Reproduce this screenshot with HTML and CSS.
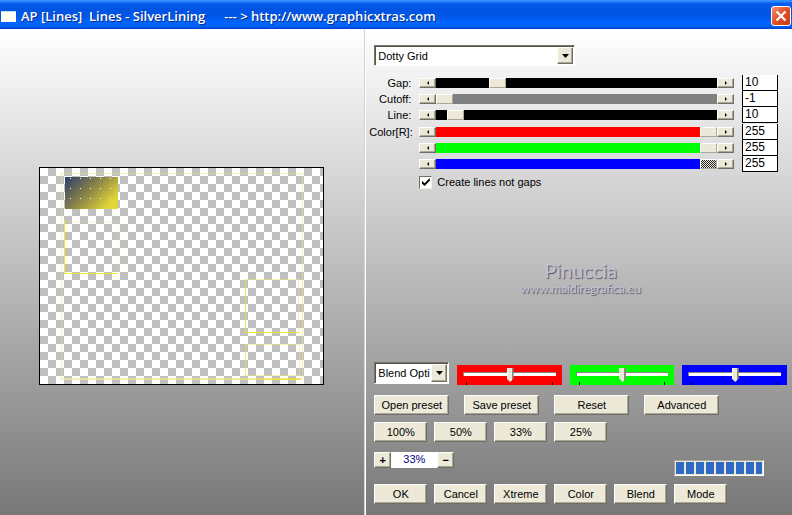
FILE: index.html
```html
<!DOCTYPE html>
<html lang="en">
<head>
<meta charset="utf-8">
<title>AP [Lines] Lines - SilverLining</title>
<link rel="stylesheet" href="styles.css">
</head>
<body>
<div class="window">
  <header class="titlebar">
    <span class="app-icon"></span>
    <h1 class="title"><span>AP [Lines]&nbsp; Lines - SilverLining</span><span>--- &gt; http://www.graphicxtras.com</span></h1>
    <button class="close" type="button" aria-label="Close">
      <svg viewBox="0 0 18 18" width="18" height="18" aria-hidden="true"><path d="M4.500 4.500L13.500 13.500M13.500 4.500L4.500 13.500" stroke="#fff" stroke-width="2.200"/></svg>
    </button>
  </header>
  <main class="body">
    <section class="preview-pane" aria-label="Preview">
      <div class="preview">
        <svg viewBox="0 0 283 216" width="283" height="216" aria-hidden="true">
          <defs>
            <linearGradient id="swatch" x1="0" y1="0" x2="1" y2="0.600">
              <stop offset="0" stop-color="#2c3f6c"/><stop offset="0.500" stop-color="#858048"/><stop offset="1" stop-color="#e0d638"/>
            </linearGradient>
            <linearGradient id="fade" x1="0" x2="1" y1="0" y2="0">
              <stop offset="0" stop-color="#f3ee9c"/><stop offset="0.800" stop-color="#ece56a"/><stop offset="1" stop-color="#e3dc20"/>
            </linearGradient>
            <pattern id="dots" x="30" y="10" width="10" height="10" patternUnits="userSpaceOnUse"><rect width="1" height="1" fill="#fff"/></pattern>
          </defs>
          <g fill="#eee86a" fill-opacity="0.500">
            <rect x="21" y="5" width="242" height="1"/>
            <rect x="21" y="5" width="1" height="206"/>
            <rect x="262" y="5" width="1" height="206"/>
            <rect x="24" y="53" width="54" height="1" fill-opacity="0.250"/>
            <rect x="78" y="53" width="1" height="52" fill-opacity="0.250"/>
            <rect x="205" y="111" width="54" height="1"/>
            <rect x="258" y="111" width="1" height="53"/>
            <rect x="205" y="176" width="55" height="1"/>
            <rect x="259" y="176" width="1" height="32"/>
            <rect x="205" y="207" width="55" height="1"/>
          </g>
          <rect x="21" y="210" width="240" height="2" fill="url(#fade)" opacity="0.700"/>
          <g fill="#efe62e">
            <rect x="24" y="52" width="1" height="54"/>
            <rect x="24" y="105" width="54" height="1"/>
            <rect x="205" y="111" width="1" height="54" fill-opacity="0.800"/>
            <rect x="205" y="164" width="54" height="1"/>
            <rect x="205" y="176" width="1" height="32" fill-opacity="0.600"/>
            <rect x="225" y="211" width="36" height="1"/>
          </g>
          <rect x="25" y="9" width="53" height="32" fill="url(#swatch)"/>
          <rect x="30" y="10" width="41" height="22" fill="url(#dots)"/>
        </svg>
      </div>
    </section>
    <form class="controls">
      <div class="combo combo-style">
        <select aria-label="Style"><option>Dotty Grid</option></select>
        <span class="drop"><svg viewBox="0 0 7 4" width="7" height="4"><path d="M0 0H7L3.500 4Z"/></svg></span>
      </div>

      <div class="settings">
        <div class="setting">
          <label for="gap">Gap:</label>
          <div class="scroll black"><button type="button" aria-label="Less gap"><i class="left"></i></button><input id="gap" type="range" min="0" max="50" value="10"><button type="button" aria-label="More gap"><i class="right"></i></button></div>
          <input class="value" type="text" aria-label="Gap value" value="10">
        </div>
        <div class="setting">
          <label for="cutoff">Cutoff:</label>
          <div class="scroll gray"><button type="button" aria-label="Less cutoff"><i class="left"></i></button><input id="cutoff" type="range" min="-1" max="255" value="-1"><button type="button" aria-label="More cutoff"><i class="right"></i></button></div>
          <input class="value" type="text" aria-label="Cutoff value" value="-1">
        </div>
        <div class="setting">
          <label for="line">Line:</label>
          <div class="scroll black"><button type="button" aria-label="Less line"><i class="left"></i></button><input id="line" type="range" min="0" max="255" value="10"><button type="button" aria-label="More line"><i class="right"></i></button></div>
          <input class="value" type="text" aria-label="Line value" value="10">
        </div>
        <div class="setting first-color">
          <label for="red">Color[R]:</label>
          <div class="scroll red"><button type="button" aria-label="Less red"><i class="left"></i></button><input id="red" type="range" min="0" max="255" value="255"><button type="button" aria-label="More red"><i class="right"></i></button></div>
          <input class="value" type="text" aria-label="Red value" value="255">
        </div>
        <div class="setting">
          <span></span>
          <div class="scroll green"><button type="button" aria-label="Less green"><i class="left"></i></button><input type="range" aria-label="Green" min="0" max="255" value="255"><button type="button" aria-label="More green"><i class="right"></i></button></div>
          <input class="value" type="text" aria-label="Green value" value="255">
        </div>
        <div class="setting">
          <span></span>
          <div class="scroll blue focused"><button type="button" aria-label="Less blue"><i class="left"></i></button><input type="range" aria-label="Blue" min="0" max="255" value="255"><button type="button" aria-label="More blue"><i class="right"></i></button></div>
          <input class="value" type="text" aria-label="Blue value" value="255">
        </div>
        <label class="check"><input type="checkbox" checked>Create lines not gaps</label>
      </div>

      <div class="credit"><strong>Pinuccia</strong><span>www.maidiregrafica.eu</span></div>

      <div class="blend">
        <div class="combo combo-blend">
          <select aria-label="Blend options"><option>Blend Options</option></select>
          <span class="drop"><svg viewBox="0 0 7 4" width="7" height="4"><path d="M0 0H7L3.500 4Z"/></svg></span>
        </div>
        <div class="track red"><input type="range" aria-label="Blend red" value="50"></div>
        <div class="track green"><input type="range" aria-label="Blend green" value="50"></div>
        <div class="track blue"><input type="range" aria-label="Blend blue" value="50"></div>
      </div>

      <div class="row presets"><button type="button">Open preset</button><button type="button">Save preset</button><button type="button">Reset</button><button type="button">Advanced</button></div>
      <div class="row small"><button type="button">100%</button><button type="button">50%</button><button type="button">33%</button><button type="button">25%</button></div>
      <div class="status">
        <div class="zoom"><button type="button" aria-label="Zoom in">+</button><output>33%</output><button type="button" aria-label="Zoom out">−</button></div>
        <progress max="100" value="100" aria-label="Progress"></progress>
      </div>
      <div class="row small actions"><button type="button">OK</button><button type="button">Cancel</button><button type="button">Xtreme</button><button type="button">Color</button><button type="button">Blend</button><button type="button">Mode</button></div>
    </form>
  </main>
</div>
</body>
</html>
```
FILE: styles.css
```css
* { box-sizing: border-box; }

body {
  margin: 0;
  font: 11px/14px "Liberation Sans", Arial, sans-serif;
  color: #000;
}

button, input, select {
  font: inherit;
  color: inherit;
  margin: 0;
  padding: 0;
  border-radius: 0;
}

.window {
  min-height: 100vh;
  display: flex;
  flex-direction: column;
}

/* Title bar */
.titlebar {
  height: 29px;
  display: flex;
  align-items: center;
  padding: 3px 1px 0;
  background: linear-gradient(#3a93ff 0, #2584fb 2px, #0a5ff0 3px, #0054e3 9px, #0056e8 16px, #0066ff 23px, #0062fa 26px, #0040cf 29px);
}

.app-icon {
  width: 15px;
  height: 11px;
  background: #fffff4;
  border-top: 1px solid #b8dcf4;
}

.title {
  flex: 1;
  display: flex;
  gap: 19px;
  margin: 0 0 0 5px;
  font: 600 13px/16px "Open Sans", "Noto Sans", sans-serif;
  color: #fff;
  text-shadow: 1px 1px 0 #0a2a80;
  white-space: nowrap;
}

.close {
  width: 20px;
  height: 20px;
  display: grid;
  place-items: center;
}

/* Body */
.body {
  flex: 1;
  display: flex;
  background: linear-gradient(#fff, #787878);
}

.preview-pane {
  flex: 0 0 46%;
  display: flex;
  align-items: center;
  justify-content: center;
  padding: 8px 2px 0 0;
}

.preview {
  border: 1px solid #000;
  background: conic-gradient(#c0c0c0 25%, #fff 0 50%, #c0c0c0 0 75%, #fff 0) 0 0 / 16px 16px;
}

.preview svg { display: block; }

.controls {
  flex: 1;
  min-width: 0;
  display: flex;
  flex-direction: column;
  padding: 16px 5px 11px 9px;
  border-left: 1px solid #d8d5c8;
  box-shadow: inset 1px 0 0 #fff;
}

/* Drop-downs */
.combo {
  position: relative;
  height: 21px;
  border: 1px solid;
  border-color: #77756a #fff #fff #77756a;
  box-shadow: inset 1px 1px 0 #55534a;
  background: #fff;
}

.combo select {
  display: block;
  width: 100%;
  height: 100%;
  padding: 0 18px 0 3px;
  border: 0;
  background: none;
  appearance: none;
}

.combo-style { width: 201px; }
.combo-blend { width: 75px; height: 22px; }

.drop {
  position: absolute;
  top: 1px;
  right: 1px;
  bottom: 1px;
  width: 16px;
  display: grid;
  place-items: center;
  pointer-events: none;
}

button, .drop {
  background: #ece9d8;
  border: 1px solid;
  border-color: #fff #716f64 #716f64 #fff;
  box-shadow: inset -1px -1px 0 #aca899;
}

.titlebar .close {
  background: linear-gradient(135deg, #ee9078, #df4f28 50%, #cc3a10);
  border-color: #fff;
  border-radius: 3px;
  box-shadow: none;
}

/* Effect settings */
.settings {
  margin: 9px 9px 0 -5px;
}

.setting {
  height: 16px;
  display: grid;
  grid-template-columns: 43px 1fr 36px;
  column-gap: 8px;
  align-items: center;
}

.setting label {
  text-align: right;
  padding-right: 1px;
}

.first-color { margin-top: 1px; }

.scroll {
  display: flex;
  height: 10px;
  margin-left: -1px;
}

.scroll button {
  width: 17px;
  height: 10px;
  display: grid;
  place-items: center;
}

.scroll i {
  border: 2px solid transparent;
}

.scroll .left { border-left-width: 0; border-right: 2px solid #000; }
.scroll .right { border-right-width: 0; border-left: 2px solid #000; }

.scroll input {
  flex: 1;
  min-width: 0;
  height: 10px;
  appearance: none;
  background: none;
}

.scroll input::-webkit-slider-thumb {
  appearance: none;
  width: 17px;
  height: 10px;
  background: #ece9d8;
  border: 1px solid;
  border-color: #fff #aca899 #aca899 #fff;
}

.scroll.focused input::-webkit-slider-thumb {
  background: conic-gradient(#222 25%, #ece9d8 0 50%, #222 0 75%, #ece9d8 0) 0 0 / 2px 2px;
}

.black { background: #000; }
.gray { background: #808080; }
.red { background: #f00; }
.green { background: #0f0; }
.blue { background: #00f; }

.value {
  width: 100%;
  height: 16px;
  padding: 0 0 2px 2px;
  border: 1px solid #000;
  border-top: 0;
  background: #fff;
  font-size: 12px;
}

.check {
  display: flex;
  align-items: center;
  gap: 5px;
  margin: 3px 0 0 50px;
}

.check input {
  width: 13px;
  height: 13px;
  appearance: none;
  display: grid;
  place-items: center;
  background: #fff;
  border: 1px solid;
  border-color: #716f64 #f1efe2 #f1efe2 #716f64;
}

.check input:checked::before {
  content: "";
  width: 8px;
  height: 8px;
  background: #000;
  clip-path: polygon(0 35%, 35% 65%, 100% 0, 100% 35%, 35% 100%, 0 70%);
}

/* Credit */
.credit {
  flex: 1;
  display: flex;
  flex-direction: column;
  align-items: center;
  justify-content: center;
  padding-top: 2px;
  color: #c2c2d6;
  text-shadow: 1px 1px 1px #555564;
  font: 12px/14px Lato, sans-serif;
}

.credit strong {
  font-size: 20px;
  line-height: 24px;
  font-weight: 400;
}

/* Blend sliders */
.blend {
  display: grid;
  grid-template-columns: 75px 1fr 1fr 1fr;
  column-gap: 8px;
  align-items: start;
}

.track {
  height: 20px;
  padding: 2px 6px 0;
  margin-top: 3px;
  background-image: linear-gradient(#000, #000), linear-gradient(#000, #000);
  background-size: 1px 3px;
  background-repeat: no-repeat;
  background-position: 9px 100%, calc(100% - 9px) 100%;
}

.track input {
  display: block;
  width: 100%;
  height: 14px;
  appearance: none;
  background: none;
}

.track input::-webkit-slider-runnable-track {
  height: 4px;
  background: #fff;
  border-top: 1px solid #888478;
  border-left: 1px solid #888478;
}

.track input::-webkit-slider-thumb {
  appearance: none;
  width: 7px;
  height: 14px;
  margin-top: -5px;
  background: linear-gradient(90deg, #fff 1px, #ece9d8 1px 5px, #8c897a 5px);
  clip-path: polygon(0 0, 100% 0, 100% 75%, 50% 100%, 0 75%);
}

/* Buttons */
.row { display: flex; }

.row button {
  height: 20px;
  white-space: nowrap;
}

.presets { gap: 15px; margin-top: 10px; }
.presets button { width: 75px; }
.small { gap: 7px; margin-top: 7px; }
.small button { width: 53px; }
.actions { margin-top: 8px; }

.status {
  display: flex;
  align-items: flex-start;
  margin-top: 10px;
  gap: 220px;
}

.zoom { display: flex; }

.zoom button {
  width: 17px;
  height: 16px;
  line-height: 12px;
  font-weight: bold;
}

.zoom output {
  width: 46px;
  height: 16px;
  background: #fff;
  color: #000080;
  text-align: center;
}

progress {
  appearance: none;
  width: 90px;
  height: 16px;
  margin-top: 8px;
  padding: 1px;
  border: 1px solid;
  border-color: #aca899 #fff #fff #aca899;
  background: #ece9d8;
}

progress::-webkit-progress-bar { background: #ece9d8; }

progress::-webkit-progress-value {
  background: repeating-linear-gradient(90deg, #316ac5 0 8px, #ece9d8 8px 10px);
}
```
